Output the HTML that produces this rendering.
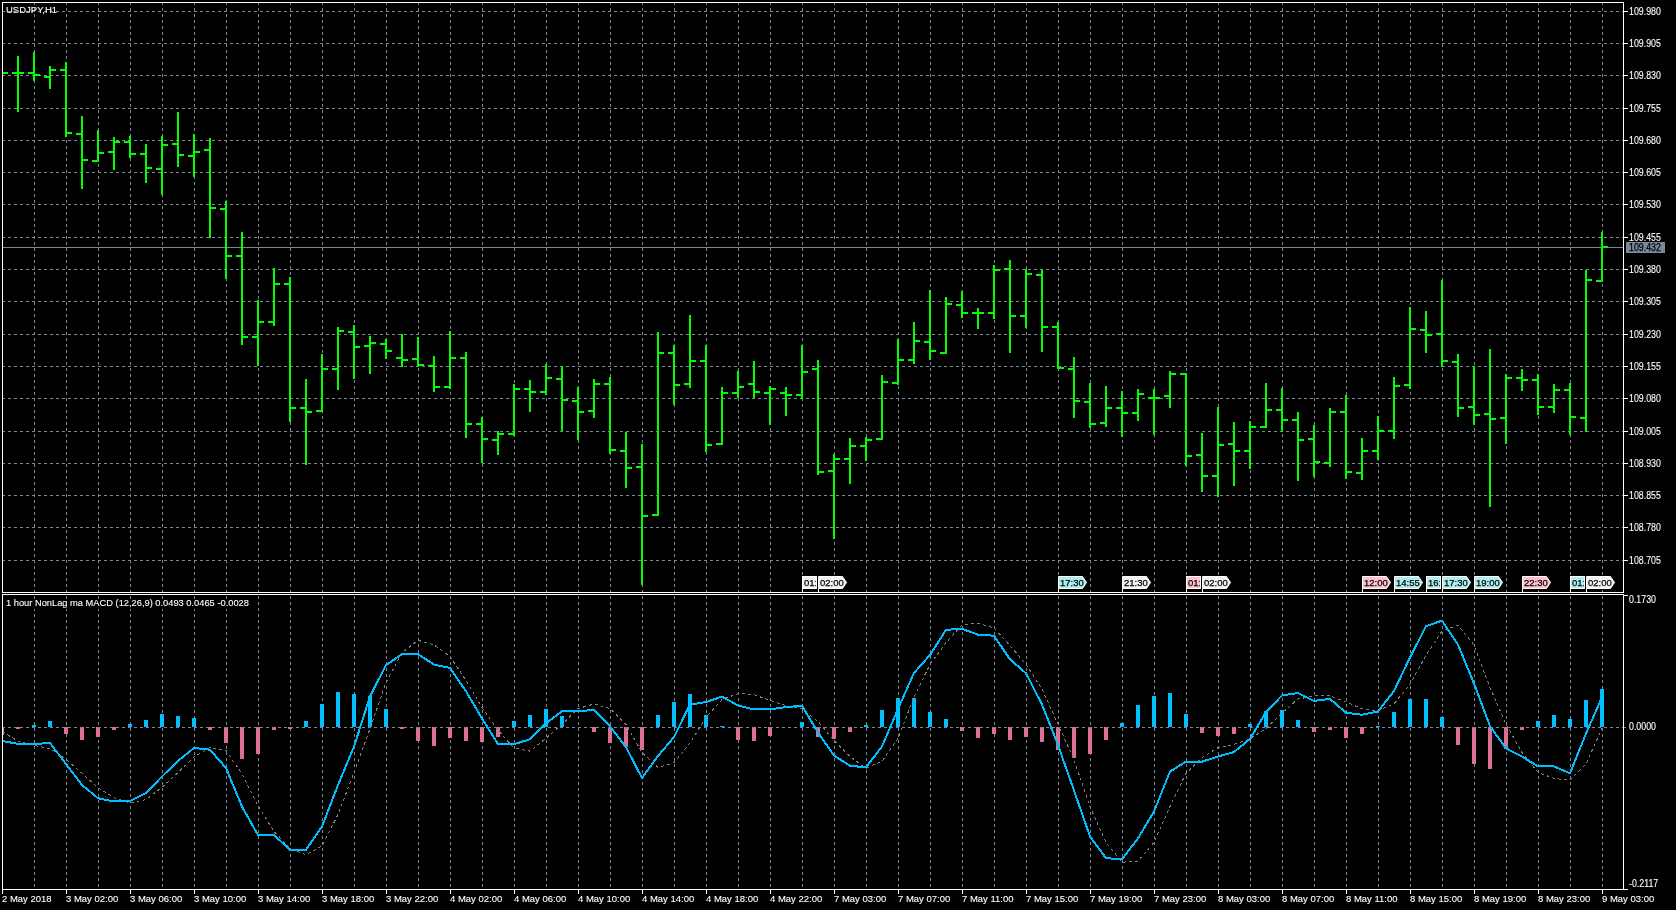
<!DOCTYPE html>
<html><head><meta charset="utf-8"><style>
html,body{margin:0;padding:0;background:#000;}
body{width:1676px;height:910px;overflow:hidden;position:relative;font-family:"Liberation Sans", sans-serif;}
.t{position:absolute;white-space:nowrap;-webkit-text-stroke:0.1px currentColor;}
.ev{-webkit-text-stroke:0.25px #000;}
#tx{position:absolute;left:0;top:0;width:1676px;height:910px;will-change:transform;}
</style></head><body>
<svg width="1676" height="910" viewBox="0 0 1676 910" style="position:absolute;left:0;top:0"><defs><clipPath id="cm"><rect x="3" y="3" width="1620" height="589"/></clipPath><clipPath id="ci"><rect x="3" y="595" width="1620" height="294"/></clipPath></defs><path d="M34.5 2V889M66.5 2V889M98.5 2V889M130.5 2V889M162.5 2V889M194.5 2V889M226.5 2V889M258.5 2V889M290.5 2V889M322.5 2V889M354.5 2V889M386.5 2V889M418.5 2V889M450.5 2V889M482.5 2V889M514.5 2V889M546.5 2V889M578.5 2V889M610.5 2V889M642.5 2V889M674.5 2V889M706.5 2V889M738.5 2V889M770.5 2V889M802.5 2V889M834.5 2V889M866.5 2V889M898.5 2V889M930.5 2V889M962.5 2V889M994.5 2V889M1026.5 2V889M1058.5 2V889M1090.5 2V889M1122.5 2V889M1154.5 2V889M1186.5 2V889M1218.5 2V889M1250.5 2V889M1282.5 2V889M1314.5 2V889M1346.5 2V889M1378.5 2V889M1410.5 2V889M1442.5 2V889M1474.5 2V889M1506.5 2V889M1538.5 2V889M1570.5 2V889M1602.5 2V889M2 11.5H1623M2 43.5H1623M2 75.5H1623M2 108.5H1623M2 140.5H1623M2 172.5H1623M2 204.5H1623M2 237.5H1623M2 269.5H1623M2 301.5H1623M2 334.5H1623M2 366.5H1623M2 398.5H1623M2 431.5H1623M2 463.5H1623M2 495.5H1623M2 527.5H1623M2 560.5H1623" stroke="#778899" stroke-width="1" stroke-dasharray="3 3" fill="none" shape-rendering="crispEdges"/><rect x="1623" y="727" width="3" height="1" fill="#778899"/><rect x="5" y="599" width="245" height="10" fill="#000"/><rect x="3" y="247" width="1620" height="1" fill="#778899"/><g clip-path="url(#cm)"><path d="M1 60.0h2v40.0h-2zM-4 72.0h5v2h-5zM3 72.0h5v2h-5zM17 56.0h2v56.0h-2zM12 72.0h5v2h-5zM19 72.0h5v2h-5zM33 52.0h2v29.0h-2zM28 72.0h5v2h-5zM35 74.0h5v2h-5zM49 66.0h2v23.0h-2zM44 76.0h5v2h-5zM51 69.0h5v2h-5zM65 62.0h2v75.0h-2zM60 69.0h5v2h-5zM67 132.0h5v2h-5zM81 116.0h2v73.0h-2zM76 133.0h5v2h-5zM83 159.0h5v2h-5zM97 130.0h2v32.0h-2zM92 160.0h5v2h-5zM99 152.0h5v2h-5zM113 137.0h2v33.0h-2zM108 151.0h5v2h-5zM115 141.0h5v2h-5zM129 136.0h2v22.0h-2zM124 141.0h5v2h-5zM131 153.0h5v2h-5zM145 144.0h2v39.0h-2zM140 153.0h5v2h-5zM147 167.0h5v2h-5zM161 136.0h2v59.0h-2zM156 168.0h5v2h-5zM163 144.0h5v2h-5zM177 112.0h2v55.0h-2zM172 143.0h5v2h-5zM179 154.0h5v2h-5zM193 134.0h2v43.0h-2zM188 155.0h5v2h-5zM195 151.0h5v2h-5zM209 138.0h2v100.0h-2zM204 149.0h5v2h-5zM211 207.0h5v2h-5zM225 201.0h2v78.0h-2zM220 208.0h5v2h-5zM227 255.0h5v2h-5zM241 232.0h2v113.0h-2zM236 255.0h5v2h-5zM243 336.0h5v2h-5zM257 300.0h2v66.0h-2zM252 336.0h5v2h-5zM259 321.0h5v2h-5zM273 268.0h2v58.0h-2zM268 321.0h5v2h-5zM275 283.0h5v2h-5zM289 277.0h2v145.0h-2zM284 283.0h5v2h-5zM291 407.0h5v2h-5zM305 379.0h2v86.0h-2zM300 407.0h5v2h-5zM307 411.0h5v2h-5zM321 354.0h2v58.0h-2zM316 410.0h5v2h-5zM323 368.0h5v2h-5zM337 327.0h2v63.0h-2zM332 368.0h5v2h-5zM339 330.0h5v2h-5zM353 325.0h2v54.0h-2zM348 331.0h5v2h-5zM355 346.0h5v2h-5zM369 336.0h2v38.0h-2zM364 345.0h5v2h-5zM371 342.0h5v2h-5zM385 339.0h2v20.0h-2zM380 343.0h5v2h-5zM387 350.0h5v2h-5zM401 334.0h2v33.0h-2zM396 357.0h5v2h-5zM403 359.0h5v2h-5zM417 337.0h2v30.0h-2zM412 358.0h5v2h-5zM419 364.0h5v2h-5zM433 356.0h2v36.0h-2zM428 365.0h5v2h-5zM435 386.0h5v2h-5zM449 331.0h2v58.0h-2zM444 386.0h5v2h-5zM451 357.0h5v2h-5zM465 352.0h2v86.0h-2zM460 357.0h5v2h-5zM467 423.0h5v2h-5zM481 417.0h2v46.0h-2zM476 423.0h5v2h-5zM483 438.0h5v2h-5zM497 431.0h2v24.0h-2zM492 439.0h5v2h-5zM499 433.0h5v2h-5zM513 384.0h2v52.0h-2zM508 433.0h5v2h-5zM515 388.0h5v2h-5zM529 380.0h2v32.0h-2zM524 388.0h5v2h-5zM531 391.0h5v2h-5zM545 364.0h2v31.0h-2zM540 391.0h5v2h-5zM547 377.0h5v2h-5zM561 366.0h2v65.0h-2zM556 378.0h5v2h-5zM563 399.0h5v2h-5zM577 387.0h2v53.0h-2zM572 400.0h5v2h-5zM579 411.0h5v2h-5zM593 379.0h2v39.0h-2zM588 410.0h5v2h-5zM595 383.0h5v2h-5zM609 377.0h2v77.0h-2zM604 383.0h5v2h-5zM611 449.0h5v2h-5zM625 432.0h2v56.0h-2zM620 450.0h5v2h-5zM627 467.0h5v2h-5zM641 444.0h2v141.0h-2zM636 466.0h5v2h-5zM643 515.0h5v2h-5zM657 332.0h2v184.0h-2zM652 514.0h5v2h-5zM659 352.0h5v2h-5zM673 345.0h2v60.0h-2zM668 352.0h5v2h-5zM675 384.0h5v2h-5zM689 315.0h2v73.0h-2zM684 383.0h5v2h-5zM691 360.0h5v2h-5zM705 345.0h2v107.0h-2zM700 360.0h5v2h-5zM707 444.0h5v2h-5zM721 387.0h2v58.0h-2zM716 443.0h5v2h-5zM723 392.0h5v2h-5zM737 371.0h2v27.0h-2zM732 392.0h5v2h-5zM739 386.0h5v2h-5zM753 361.0h2v37.0h-2zM748 383.0h5v2h-5zM755 391.0h5v2h-5zM769 386.0h2v39.0h-2zM764 392.0h5v2h-5zM771 388.0h5v2h-5zM785 387.0h2v29.0h-2zM780 392.0h5v2h-5zM787 394.0h5v2h-5zM801 345.0h2v54.0h-2zM796 394.0h5v2h-5zM803 371.0h5v2h-5zM817 360.0h2v115.0h-2zM812 368.0h5v2h-5zM819 471.0h5v2h-5zM833 454.0h2v85.0h-2zM828 470.0h5v2h-5zM835 458.0h5v2h-5zM849 438.0h2v46.0h-2zM844 458.0h5v2h-5zM851 445.0h5v2h-5zM865 437.0h2v24.0h-2zM860 445.0h5v2h-5zM867 439.0h5v2h-5zM881 375.0h2v65.0h-2zM876 438.0h5v2h-5zM883 381.0h5v2h-5zM897 339.0h2v46.0h-2zM892 382.0h5v2h-5zM899 359.0h5v2h-5zM913 322.0h2v42.0h-2zM908 359.0h5v2h-5zM915 340.0h5v2h-5zM929 290.0h2v70.0h-2zM924 341.0h5v2h-5zM931 350.0h5v2h-5zM945 297.0h2v57.0h-2zM940 352.0h5v2h-5zM947 303.0h5v2h-5zM961 291.0h2v27.0h-2zM956 304.0h5v2h-5zM963 312.0h5v2h-5zM977 308.0h2v21.0h-2zM972 312.0h5v2h-5zM979 312.0h5v2h-5zM993 265.0h2v54.0h-2zM988 312.0h5v2h-5zM995 269.0h5v2h-5zM1009 260.0h2v93.0h-2zM1004 268.0h5v2h-5zM1011 315.0h5v2h-5zM1025 269.0h2v59.0h-2zM1020 315.0h5v2h-5zM1027 273.0h5v2h-5zM1041 270.0h2v82.0h-2zM1036 274.0h5v2h-5zM1043 326.0h5v2h-5zM1057 322.0h2v47.0h-2zM1052 326.0h5v2h-5zM1059 367.0h5v2h-5zM1073 357.0h2v61.0h-2zM1068 368.0h5v2h-5zM1075 400.0h5v2h-5zM1089 383.0h2v45.0h-2zM1084 401.0h5v2h-5zM1091 423.0h5v2h-5zM1105 386.0h2v41.0h-2zM1100 422.0h5v2h-5zM1107 407.0h5v2h-5zM1121 391.0h2v46.0h-2zM1116 407.0h5v2h-5zM1123 412.0h5v2h-5zM1137 389.0h2v32.0h-2zM1132 412.0h5v2h-5zM1139 393.0h5v2h-5zM1153 389.0h2v46.0h-2zM1148 397.0h5v2h-5zM1155 397.0h5v2h-5zM1169 371.0h2v37.0h-2zM1164 395.0h5v2h-5zM1171 373.0h5v2h-5zM1185 373.0h2v93.0h-2zM1180 373.0h5v2h-5zM1187 455.0h5v2h-5zM1201 433.0h2v59.0h-2zM1196 454.0h5v2h-5zM1203 475.0h5v2h-5zM1217 407.0h2v90.0h-2zM1212 475.0h5v2h-5zM1219 444.0h5v2h-5zM1233 422.0h2v64.0h-2zM1228 443.0h5v2h-5zM1235 450.0h5v2h-5zM1249 421.0h2v48.0h-2zM1244 450.0h5v2h-5zM1251 426.0h5v2h-5zM1265 383.0h2v45.0h-2zM1260 426.0h5v2h-5zM1267 409.0h5v2h-5zM1281 388.0h2v44.0h-2zM1276 409.0h5v2h-5zM1283 419.0h5v2h-5zM1297 412.0h2v69.0h-2zM1292 419.0h5v2h-5zM1299 439.0h5v2h-5zM1313 425.0h2v52.0h-2zM1308 438.0h5v2h-5zM1315 461.0h5v2h-5zM1329 408.0h2v59.0h-2zM1324 462.0h5v2h-5zM1331 411.0h5v2h-5zM1345 395.0h2v84.0h-2zM1340 411.0h5v2h-5zM1347 471.0h5v2h-5zM1361 438.0h2v42.0h-2zM1356 472.0h5v2h-5zM1363 450.0h5v2h-5zM1377 416.0h2v44.0h-2zM1372 450.0h5v2h-5zM1379 430.0h5v2h-5zM1393 377.0h2v62.0h-2zM1388 430.0h5v2h-5zM1395 385.0h5v2h-5zM1409 307.0h2v82.0h-2zM1404 384.0h5v2h-5zM1411 328.0h5v2h-5zM1425 311.0h2v42.0h-2zM1420 329.0h5v2h-5zM1427 334.0h5v2h-5zM1441 280.0h2v87.0h-2zM1436 333.0h5v2h-5zM1443 360.0h5v2h-5zM1457 354.0h2v63.0h-2zM1452 361.0h5v2h-5zM1459 407.0h5v2h-5zM1473 366.0h2v59.0h-2zM1468 406.0h5v2h-5zM1475 414.0h5v2h-5zM1489 349.0h2v158.0h-2zM1484 413.0h5v2h-5zM1491 418.0h5v2h-5zM1505 374.0h2v70.0h-2zM1500 417.0h5v2h-5zM1507 377.0h5v2h-5zM1521 369.0h2v22.0h-2zM1516 377.0h5v2h-5zM1523 379.0h5v2h-5zM1537 374.0h2v41.0h-2zM1532 379.0h5v2h-5zM1539 406.0h5v2h-5zM1553 384.0h2v29.0h-2zM1548 406.0h5v2h-5zM1555 389.0h5v2h-5zM1569 383.0h2v52.0h-2zM1564 389.0h5v2h-5zM1571 416.0h5v2h-5zM1585 270.0h2v162.0h-2zM1580 417.0h5v2h-5zM1587 279.0h5v2h-5zM1601 232.0h2v50.0h-2zM1596 280.0h5v2h-5zM1603 246.0h5v2h-5z" fill="#00ff00" shape-rendering="crispEdges"/></g><g clip-path="url(#ci)"><path d="M32 725h4v2h-4zM48 721h4v6h-4zM128 724h4v3h-4zM144 720h4v7h-4zM160 714h4v13h-4zM176 716h4v11h-4zM192 718h4v9h-4zM304 721h4v6h-4zM320 704h4v23h-4zM336 692h4v35h-4zM352 694h4v33h-4zM368 696h4v31h-4zM384 709h4v18h-4zM512 721h4v6h-4zM528 715h4v12h-4zM544 709h4v18h-4zM560 716h4v11h-4zM656 715h4v12h-4zM672 702h4v25h-4zM688 694h4v33h-4zM704 715h4v12h-4zM720 726h4v1h-4zM800 722h4v5h-4zM864 725h4v2h-4zM880 710h4v17h-4zM896 698h4v29h-4zM912 698h4v29h-4zM928 712h4v15h-4zM944 719h4v8h-4zM1120 723h4v4h-4zM1136 705h4v22h-4zM1152 696h4v31h-4zM1168 693h4v34h-4zM1184 714h4v13h-4zM1248 724h4v3h-4zM1264 711h4v16h-4zM1280 710h4v17h-4zM1296 720h4v7h-4zM1376 726h4v1h-4zM1392 712h4v15h-4zM1408 699h4v28h-4zM1424 699h4v28h-4zM1440 717h4v10h-4zM1536 721h4v6h-4zM1552 715h4v12h-4zM1568 719h4v8h-4zM1584 700h4v27h-4zM1600 689h4v38h-4z" fill="#00bfff" shape-rendering="crispEdges"/><path d="M0 727h4v8h-4zM16 727h4v2h-4zM64 727h4v7h-4zM80 727h4v13h-4zM96 727h4v10h-4zM112 727h4v3h-4zM208 727h4v3h-4zM224 727h4v16h-4zM240 727h4v32h-4zM256 727h4v27h-4zM272 727h4v3h-4zM288 727h4v2h-4zM400 727h4v2h-4zM416 727h4v14h-4zM432 727h4v19h-4zM448 727h4v11h-4zM464 727h4v14h-4zM480 727h4v15h-4zM496 727h4v10h-4zM592 727h4v5h-4zM608 727h4v16h-4zM624 727h4v20h-4zM640 727h4v23h-4zM736 727h4v13h-4zM752 727h4v14h-4zM768 727h4v9h-4zM816 727h4v10h-4zM832 727h4v12h-4zM848 727h4v5h-4zM960 727h4v4h-4zM976 727h4v11h-4zM992 727h4v7h-4zM1008 727h4v13h-4zM1024 727h4v10h-4zM1040 727h4v15h-4zM1056 727h4v23h-4zM1072 727h4v31h-4zM1088 727h4v27h-4zM1104 727h4v13h-4zM1200 727h4v6h-4zM1216 727h4v9h-4zM1232 727h4v7h-4zM1312 727h4v5h-4zM1328 727h4v3h-4zM1344 727h4v11h-4zM1360 727h4v7h-4zM1456 727h4v18h-4zM1472 727h4v37h-4zM1488 727h4v42h-4zM1504 727h4v22h-4zM1520 727h4v3h-4z" fill="#db7093" shape-rendering="crispEdges"/><path d="M2 727.5H1623" stroke="#778899" stroke-width="1" stroke-dasharray="3 3" fill="none" shape-rendering="crispEdges"/><polyline points="2,731.6 18,741.0 34,745.5 50,748.5 66,759.3 82,773.2 98,787.7 114,797.6 130,802.9 146,799.6 162,787.3 178,772.5 194,757.0 210,747.4 226,750.3 242,774.0 258,805.7 274,831.4 290,848.2 306,854.8 322,846.0 338,814.6 354,772.4 370,728.9 386,682.4 402,652.7 418,640.3 434,644.8 450,656.7 466,680.4 482,707.5 498,730.0 514,748.1 530,751.1 546,738.2 562,724.4 578,708.6 594,704.0 610,708.6 626,724.4 642,752.5 658,767.4 674,762.8 690,743.1 706,717.4 722,699.6 738,693.6 754,694.6 770,700.5 786,705.5 802,709.1 818,721.5 834,740.5 850,756.4 866,768.2 882,761.3 898,738.6 914,697.0 930,664.4 946,642.6 962,624.8 978,623.2 994,627.8 1010,645.6 1026,664.4 1042,689.1 1058,724.2 1074,759.8 1090,806.8 1106,842.4 1122,862.2 1138,861.2 1154,842.4 1170,806.5 1186,773.3 1202,757.8 1218,747.6 1234,744.4 1250,738.9 1266,728.6 1282,712.9 1298,699.1 1314,695.9 1330,695.9 1346,701.9 1362,708.8 1378,710.8 1394,703.8 1410,684.1 1426,655.4 1442,631.0 1458,625.3 1474,644.9 1490,687.7 1506,724.2 1522,752.4 1538,772.3 1554,778.5 1570,780.0 1586,763.9 1602,728.4" stroke="#808080" stroke-width="1" stroke-dasharray="3 3" fill="none" shape-rendering="crispEdges"/><polyline points="2,741.0 18,743.8 34,744.0 50,743.0 66,764.0 82,785.0 98,798.2 114,801.5 130,800.9 146,793.0 162,776.5 178,761.0 194,748.0 210,749.7 226,768.0 242,806.7 258,835.0 274,835.0 290,849.8 306,849.8 322,826.5 338,785.0 354,746.7 370,696.3 386,665.2 402,654.1 418,654.1 434,664.6 450,668.0 466,691.3 482,718.5 498,744.0 514,744.2 530,739.2 546,723.4 562,711.1 578,711.1 594,710.0 610,726.4 626,747.1 642,778.0 658,756.0 674,737.1 690,704.5 706,702.1 722,696.6 738,705.5 754,709.4 770,709.4 786,707.1 802,705.7 818,732.6 834,755.4 850,765.9 866,767.2 882,746.5 898,708.9 914,672.9 930,655.1 946,629.8 962,628.8 978,634.7 994,635.7 1010,659.4 1026,673.3 1042,704.5 1058,745.0 1074,790.5 1090,836.5 1106,858.2 1122,859.2 1138,838.4 1154,811.5 1170,771.5 1186,761.7 1202,761.7 1218,756.5 1234,752.1 1250,738.9 1266,712.2 1282,695.4 1298,693.0 1314,700.9 1330,698.9 1346,712.7 1362,714.7 1378,711.4 1394,691.0 1410,657.4 1426,626.3 1442,620.6 1458,644.6 1474,683.5 1490,726.3 1506,748.3 1522,756.6 1538,766.4 1554,766.4 1570,773.3 1586,733.6 1602,697.1" stroke="#00bfff" stroke-width="2" fill="none" stroke-linejoin="round" shape-rendering="crispEdges"/></g><rect x="802.5" y="576.5" width="14" height="12" fill="#f0f0f0" stroke="#fff" stroke-width="1" shape-rendering="crispEdges"/><rect x="802" y="589" width="1" height="3" fill="#fff"/><polygon points="818.5,576.5 842.5,576.5 846.5,582.5 842.5,588.5 818.5,588.5" fill="#f0f0f0" stroke="#fff" stroke-width="1"/><rect x="818" y="589" width="1" height="3" fill="#fff"/><polygon points="1058.5,576.5 1082.5,576.5 1086.5,582.5 1082.5,588.5 1058.5,588.5" fill="#afeeee" stroke="#fff" stroke-width="1"/><rect x="1058" y="589" width="1" height="3" fill="#fff"/><polygon points="1122.5,576.5 1146.5,576.5 1150.5,582.5 1146.5,588.5 1122.5,588.5" fill="#f0f0f0" stroke="#fff" stroke-width="1"/><rect x="1122" y="589" width="1" height="3" fill="#fff"/><rect x="1186.5" y="576.5" width="14" height="12" fill="#ffc0cb" stroke="#fff" stroke-width="1" shape-rendering="crispEdges"/><rect x="1186" y="589" width="1" height="3" fill="#fff"/><polygon points="1202.5,576.5 1226.5,576.5 1230.5,582.5 1226.5,588.5 1202.5,588.5" fill="#f0f0f0" stroke="#fff" stroke-width="1"/><rect x="1202" y="589" width="1" height="3" fill="#fff"/><polygon points="1362.5,576.5 1386.5,576.5 1390.5,582.5 1386.5,588.5 1362.5,588.5" fill="#ffc0cb" stroke="#fff" stroke-width="1"/><rect x="1362" y="589" width="1" height="3" fill="#fff"/><polygon points="1394.5,576.5 1418.5,576.5 1422.5,582.5 1418.5,588.5 1394.5,588.5" fill="#afeeee" stroke="#fff" stroke-width="1"/><rect x="1394" y="589" width="1" height="3" fill="#fff"/><rect x="1426.5" y="576.5" width="14" height="12" fill="#afeeee" stroke="#fff" stroke-width="1" shape-rendering="crispEdges"/><rect x="1426" y="589" width="1" height="3" fill="#fff"/><polygon points="1442.5,576.5 1466.5,576.5 1470.5,582.5 1466.5,588.5 1442.5,588.5" fill="#afeeee" stroke="#fff" stroke-width="1"/><rect x="1442" y="589" width="1" height="3" fill="#fff"/><polygon points="1474.5,576.5 1498.5,576.5 1502.5,582.5 1498.5,588.5 1474.5,588.5" fill="#afeeee" stroke="#fff" stroke-width="1"/><rect x="1474" y="589" width="1" height="3" fill="#fff"/><polygon points="1522.5,576.5 1546.5,576.5 1550.5,582.5 1546.5,588.5 1522.5,588.5" fill="#ffc0cb" stroke="#fff" stroke-width="1"/><rect x="1522" y="589" width="1" height="3" fill="#fff"/><rect x="1570.5" y="576.5" width="14" height="12" fill="#afeeee" stroke="#fff" stroke-width="1" shape-rendering="crispEdges"/><rect x="1570" y="589" width="1" height="3" fill="#fff"/><polygon points="1586.5,576.5 1610.5,576.5 1614.5,582.5 1610.5,588.5 1586.5,588.5" fill="#f0f0f0" stroke="#fff" stroke-width="1"/><rect x="1586" y="589" width="1" height="3" fill="#fff"/><path d="M2.5 2.5H1623.5V592.5H2.5Z M2.5 594.5H1623.5V889.5H2.5Z" stroke="#fff" stroke-width="1" fill="none" shape-rendering="crispEdges"/><path d="M1623 11h5v1h-5zM1623 43h5v1h-5zM1623 75h5v1h-5zM1623 108h5v1h-5zM1623 140h5v1h-5zM1623 172h5v1h-5zM1623 204h5v1h-5zM1623 237h5v1h-5zM1623 269h5v1h-5zM1623 301h5v1h-5zM1623 334h5v1h-5zM1623 366h5v1h-5zM1623 398h5v1h-5zM1623 431h5v1h-5zM1623 463h5v1h-5zM1623 495h5v1h-5zM1623 527h5v1h-5zM1623 560h5v1h-5zM1623 595h5v1h-5zM1623 889h5v1h-5zM2 889h1v5h-1zM66 889h1v5h-1zM130 889h1v5h-1zM194 889h1v5h-1zM258 889h1v5h-1zM322 889h1v5h-1zM386 889h1v5h-1zM450 889h1v5h-1zM514 889h1v5h-1zM578 889h1v5h-1zM642 889h1v5h-1zM706 889h1v5h-1zM770 889h1v5h-1zM834 889h1v5h-1zM898 889h1v5h-1zM962 889h1v5h-1zM1026 889h1v5h-1zM1090 889h1v5h-1zM1154 889h1v5h-1zM1218 889h1v5h-1zM1282 889h1v5h-1zM1346 889h1v5h-1zM1410 889h1v5h-1zM1474 889h1v5h-1zM1538 889h1v5h-1zM1602 889h1v5h-1z" fill="#fff" shape-rendering="crispEdges"/><rect x="1626" y="242" width="39" height="11" fill="#778899"/></svg>
<div id="tx"><div class="t" style="left:6px;top:4.88px;font-size:9.5px;line-height:9.5px;color:#fff;">USDJPY,H1</div><div class="t" style="left:1629px;top:6.83px;font-size:10px;line-height:10px;color:#fff;transform:scaleX(0.88);transform-origin:0 0;">109.980</div><div class="t" style="left:1629px;top:38.83px;font-size:10px;line-height:10px;color:#fff;transform:scaleX(0.88);transform-origin:0 0;">109.905</div><div class="t" style="left:1629px;top:70.83px;font-size:10px;line-height:10px;color:#fff;transform:scaleX(0.88);transform-origin:0 0;">109.830</div><div class="t" style="left:1629px;top:103.83px;font-size:10px;line-height:10px;color:#fff;transform:scaleX(0.88);transform-origin:0 0;">109.755</div><div class="t" style="left:1629px;top:135.82px;font-size:10px;line-height:10px;color:#fff;transform:scaleX(0.88);transform-origin:0 0;">109.680</div><div class="t" style="left:1629px;top:167.82px;font-size:10px;line-height:10px;color:#fff;transform:scaleX(0.88);transform-origin:0 0;">109.605</div><div class="t" style="left:1629px;top:199.82px;font-size:10px;line-height:10px;color:#fff;transform:scaleX(0.88);transform-origin:0 0;">109.530</div><div class="t" style="left:1629px;top:232.82px;font-size:10px;line-height:10px;color:#fff;transform:scaleX(0.88);transform-origin:0 0;">109.455</div><div class="t" style="left:1629px;top:264.82px;font-size:10px;line-height:10px;color:#fff;transform:scaleX(0.88);transform-origin:0 0;">109.380</div><div class="t" style="left:1629px;top:296.82px;font-size:10px;line-height:10px;color:#fff;transform:scaleX(0.88);transform-origin:0 0;">109.305</div><div class="t" style="left:1629px;top:329.82px;font-size:10px;line-height:10px;color:#fff;transform:scaleX(0.88);transform-origin:0 0;">109.230</div><div class="t" style="left:1629px;top:361.82px;font-size:10px;line-height:10px;color:#fff;transform:scaleX(0.88);transform-origin:0 0;">109.155</div><div class="t" style="left:1629px;top:393.82px;font-size:10px;line-height:10px;color:#fff;transform:scaleX(0.88);transform-origin:0 0;">109.080</div><div class="t" style="left:1629px;top:426.82px;font-size:10px;line-height:10px;color:#fff;transform:scaleX(0.88);transform-origin:0 0;">109.005</div><div class="t" style="left:1629px;top:458.82px;font-size:10px;line-height:10px;color:#fff;transform:scaleX(0.88);transform-origin:0 0;">108.930</div><div class="t" style="left:1629px;top:490.82px;font-size:10px;line-height:10px;color:#fff;transform:scaleX(0.88);transform-origin:0 0;">108.855</div><div class="t" style="left:1629px;top:522.83px;font-size:10px;line-height:10px;color:#fff;transform:scaleX(0.88);transform-origin:0 0;">108.780</div><div class="t" style="left:1629px;top:555.83px;font-size:10px;line-height:10px;color:#fff;transform:scaleX(0.88);transform-origin:0 0;">108.705</div><div class="t ev" style="left:1629px;top:243.32px;font-size:10px;line-height:10px;color:#000;transform:scaleX(0.88);transform-origin:0 0;">109.432</div><div class="t" style="left:6px;top:598.91px;font-size:9.3px;line-height:9.3px;color:#fff;">1 hour NonLag ma MACD (12,26,9) 0.0493 0.0465 -0.0028</div><div class="t" style="left:1629px;top:595.33px;font-size:10px;line-height:10px;color:#fff;transform:scaleX(0.88);transform-origin:0 0;">0.1730</div><div class="t" style="left:1629px;top:722.33px;font-size:10px;line-height:10px;color:#fff;transform:scaleX(0.88);transform-origin:0 0;">0.0000</div><div class="t" style="left:1629px;top:879.33px;font-size:10px;line-height:10px;color:#fff;transform:scaleX(0.88);transform-origin:0 0;">-0.2117</div><div class="t" style="left:2px;top:893.88px;font-size:9.5px;line-height:9.5px;color:#fff;">2 May 2018</div><div class="t" style="left:66px;top:893.88px;font-size:9.5px;line-height:9.5px;color:#fff;">3 May 02:00</div><div class="t" style="left:130px;top:893.88px;font-size:9.5px;line-height:9.5px;color:#fff;">3 May 06:00</div><div class="t" style="left:194px;top:893.88px;font-size:9.5px;line-height:9.5px;color:#fff;">3 May 10:00</div><div class="t" style="left:258px;top:893.88px;font-size:9.5px;line-height:9.5px;color:#fff;">3 May 14:00</div><div class="t" style="left:322px;top:893.88px;font-size:9.5px;line-height:9.5px;color:#fff;">3 May 18:00</div><div class="t" style="left:386px;top:893.88px;font-size:9.5px;line-height:9.5px;color:#fff;">3 May 22:00</div><div class="t" style="left:450px;top:893.88px;font-size:9.5px;line-height:9.5px;color:#fff;">4 May 02:00</div><div class="t" style="left:514px;top:893.88px;font-size:9.5px;line-height:9.5px;color:#fff;">4 May 06:00</div><div class="t" style="left:578px;top:893.88px;font-size:9.5px;line-height:9.5px;color:#fff;">4 May 10:00</div><div class="t" style="left:642px;top:893.88px;font-size:9.5px;line-height:9.5px;color:#fff;">4 May 14:00</div><div class="t" style="left:706px;top:893.88px;font-size:9.5px;line-height:9.5px;color:#fff;">4 May 18:00</div><div class="t" style="left:770px;top:893.88px;font-size:9.5px;line-height:9.5px;color:#fff;">4 May 22:00</div><div class="t" style="left:834px;top:893.88px;font-size:9.5px;line-height:9.5px;color:#fff;">7 May 03:00</div><div class="t" style="left:898px;top:893.88px;font-size:9.5px;line-height:9.5px;color:#fff;">7 May 07:00</div><div class="t" style="left:962px;top:893.88px;font-size:9.5px;line-height:9.5px;color:#fff;">7 May 11:00</div><div class="t" style="left:1026px;top:893.88px;font-size:9.5px;line-height:9.5px;color:#fff;">7 May 15:00</div><div class="t" style="left:1090px;top:893.88px;font-size:9.5px;line-height:9.5px;color:#fff;">7 May 19:00</div><div class="t" style="left:1154px;top:893.88px;font-size:9.5px;line-height:9.5px;color:#fff;">7 May 23:00</div><div class="t" style="left:1218px;top:893.88px;font-size:9.5px;line-height:9.5px;color:#fff;">8 May 03:00</div><div class="t" style="left:1282px;top:893.88px;font-size:9.5px;line-height:9.5px;color:#fff;">8 May 07:00</div><div class="t" style="left:1346px;top:893.88px;font-size:9.5px;line-height:9.5px;color:#fff;">8 May 11:00</div><div class="t" style="left:1410px;top:893.88px;font-size:9.5px;line-height:9.5px;color:#fff;">8 May 15:00</div><div class="t" style="left:1474px;top:893.88px;font-size:9.5px;line-height:9.5px;color:#fff;">8 May 19:00</div><div class="t" style="left:1538px;top:893.88px;font-size:9.5px;line-height:9.5px;color:#fff;">8 May 23:00</div><div class="t" style="left:1602px;top:893.88px;font-size:9.5px;line-height:9.5px;color:#fff;">9 May 03:00</div><div style="position:absolute;left:803px;top:576px;width:13px;height:12px;overflow:hidden"><div class="t ev" style="left:1px;top:1.88px;font-size:9.5px;line-height:9.5px;color:#000">01:00</div></div><div class="t ev" style="left:820px;top:577.88px;font-size:9.5px;line-height:9.5px;color:#000;">02:00</div><div class="t ev" style="left:1060px;top:577.88px;font-size:9.5px;line-height:9.5px;color:#000;">17:30</div><div class="t ev" style="left:1124px;top:577.88px;font-size:9.5px;line-height:9.5px;color:#000;">21:30</div><div style="position:absolute;left:1187px;top:576px;width:13px;height:12px;overflow:hidden"><div class="t ev" style="left:1px;top:1.88px;font-size:9.5px;line-height:9.5px;color:#000">01:00</div></div><div class="t ev" style="left:1204px;top:577.88px;font-size:9.5px;line-height:9.5px;color:#000;">02:00</div><div class="t ev" style="left:1364px;top:577.88px;font-size:9.5px;line-height:9.5px;color:#000;">12:00</div><div class="t ev" style="left:1396px;top:577.88px;font-size:9.5px;line-height:9.5px;color:#000;">14:55</div><div style="position:absolute;left:1427px;top:576px;width:13px;height:12px;overflow:hidden"><div class="t ev" style="left:1px;top:1.88px;font-size:9.5px;line-height:9.5px;color:#000">16:00</div></div><div class="t ev" style="left:1444px;top:577.88px;font-size:9.5px;line-height:9.5px;color:#000;">17:30</div><div class="t ev" style="left:1476px;top:577.88px;font-size:9.5px;line-height:9.5px;color:#000;">19:00</div><div class="t ev" style="left:1524px;top:577.88px;font-size:9.5px;line-height:9.5px;color:#000;">22:30</div><div style="position:absolute;left:1571px;top:576px;width:13px;height:12px;overflow:hidden"><div class="t ev" style="left:1px;top:1.88px;font-size:9.5px;line-height:9.5px;color:#000">01:00</div></div><div class="t ev" style="left:1588px;top:577.88px;font-size:9.5px;line-height:9.5px;color:#000;">02:00</div></div>
</body></html>
